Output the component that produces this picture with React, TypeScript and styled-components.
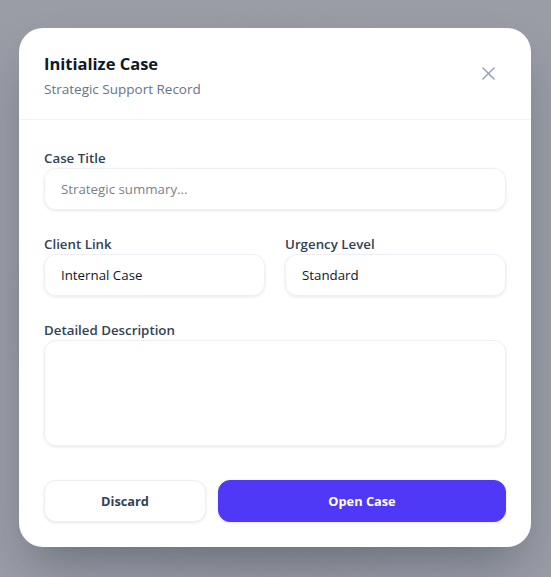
import styled, { createGlobalStyle } from "styled-components";

const GlobalStyle = createGlobalStyle`
  * {
    box-sizing: border-box;
  }

  body {
    margin: 0;
    font-family: "Open Sans", "Noto Sans", sans-serif;
    background: #9a9da6;
  }
`;

const Backdrop = styled.div`
  width: 551px;
  height: 577px;
  display: flex;
  padding: 28px 0 0 19px;
  background: radial-gradient(ellipse at 50% 55%, #8a8d96 0%, #9a9da6 70%);
`;

const Modal = styled.div`
  width: 512px;
  height: 519px;
  background: #fff;
  border-radius: 24px;
  box-shadow: 0 25px 50px -12px rgba(15, 23, 42, 0.35);
  display: flex;
  flex-direction: column;
  overflow: hidden;
`;

const Header = styled.div`
  height: 92px;
  padding: 24px 25px 0 25px;
  border-bottom: 1px solid #f1f3f7;
  display: flex;
  justify-content: space-between;
  align-items: flex-start;

  .title {
    margin: 0;
    font-size: 16.5px;
    font-weight: 700;
    line-height: 24px;
    color: #0f172a;
  }

  .subtitle {
    margin: 4px 0 0 0;
    font-size: 13.5px;
    line-height: 18px;
    color: #64748b;
  }
`;

const CloseButton = styled.button`
  width: 24px;
  height: 24px;
  margin: 9px 6px 0 0;
  padding: 0;
  border: none;
  background: transparent;
  color: #94a3b8;
  display: flex;
  align-items: center;
  justify-content: center;
  cursor: pointer;
`;

const Body = styled.div`
  padding: 29px 25px 25px 25px;
  display: flex;
  flex-direction: column;
  gap: 25px;
  flex: 1;
`;

const Row = styled.div`
  display: grid;
  grid-template-columns: 1fr 1fr;
  gap: 20px;
`;

const Field = styled.label`
  display: flex;
  flex-direction: column;
  gap: 1px;

  span {
    font-size: 13.3px;
    font-weight: 600;
    line-height: 18px;
    color: #334155;
  }
`;

const Input = styled.div<{ $placeholder?: boolean; $tall?: boolean }>`
  height: ${(p) => (p.$tall ? "106px" : "42px")};
  padding: 0 16px;
  border: 1px solid #eef0f6;
  border-radius: 12px;
  box-shadow: 0 1px 3px rgba(15, 23, 42, 0.1);
  display: flex;
  align-items: center;
  font-size: 13.3px;
  color: ${(p) => (p.$placeholder ? "#7b818b" : "#0f172a")};
`;

const Actions = styled.div`
  margin-top: 9px;
  display: grid;
  grid-template-columns: 162px 1fr;
  gap: 12px;
`;

const Button = styled.button<{ $primary?: boolean }>`
  height: 42px;
  border-radius: 12px;
  font-family: inherit;
  font-size: 12.8px;
  font-weight: 700;
  cursor: pointer;
  border: 1px solid ${(p) => (p.$primary ? "#4f39f6" : "#eef0f6")};
  background: ${(p) => (p.$primary ? "#4f39f6" : "#fff")};
  color: ${(p) => (p.$primary ? "#fff" : "#334155")};
  box-shadow: 0 1px 3px rgba(15, 23, 42, 0.1);
`;

const App = () => {
  return (
    <>
      <GlobalStyle />
      <Backdrop>
        <Modal>
          <Header>
            <div>
              <h2 className="title">Initialize Case</h2>
              <p className="subtitle">Strategic Support Record</p>
            </div>
            <CloseButton aria-label="Close">
              <svg width="13" height="13" viewBox="0 0 13 13" fill="none">
                <path d="M1 1L12 12M12 1L1 12" stroke="currentColor" strokeWidth="1.5" strokeLinecap="round" />
              </svg>
            </CloseButton>
          </Header>

          <Body>
            <Field>
              <span>Case Title</span>
              <Input $placeholder>Strategic summary...</Input>
            </Field>

            <Row>
              <Field>
                <span>Client Link</span>
                <Input>Internal Case</Input>
              </Field>
              <Field>
                <span>Urgency Level</span>
                <Input>Standard</Input>
              </Field>
            </Row>

            <Field>
              <span>Detailed Description</span>
              <Input $tall />
            </Field>

            <Actions>
              <Button>Discard</Button>
              <Button $primary>Open Case</Button>
            </Actions>
          </Body>
        </Modal>
      </Backdrop>
    </>
  );
};

export default App;
